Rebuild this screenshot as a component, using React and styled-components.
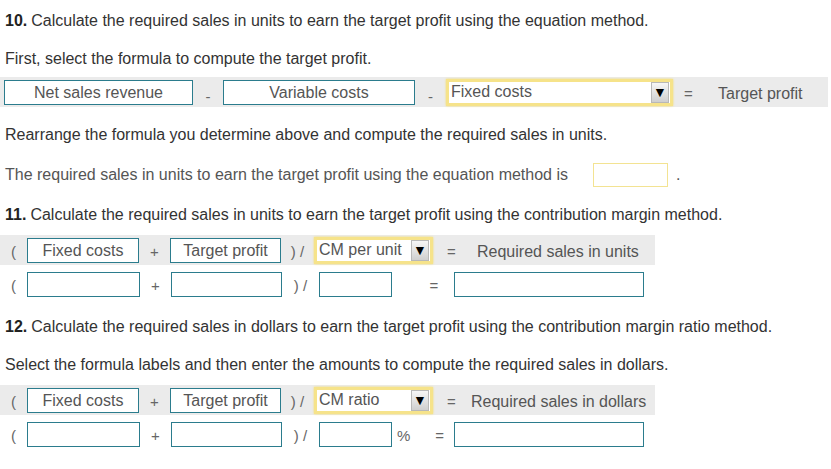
import styled, { createGlobalStyle } from 'styled-components';

const GlobalStyle = createGlobalStyle`
  body {
    margin: 0;
    background: #fff;
    font-family: 'Liberation Sans', Arial, sans-serif;
    color: #333;
  }
`;

const Page = styled.div`
  width: 831px;
  padding: 11px 0 0 5px;
  box-sizing: border-box;
`;

const Text = styled.p`
  margin: 0;
  height: 20px;
  line-height: 20px;
  font-size: 16px;
  white-space: nowrap;
  color: ${(p) => (p.$muted ? '#555' : '#333')};
  margin-bottom: ${(p) => p.$mb || 0}px;
  display: flex;
  align-items: center;

  b {
    font-weight: bold;
    color: #222;
    margin-right: 4px;
  }
`;

const GrayRow = styled.div`
  display: flex;
  align-items: center;
  height: 30px;
  width: ${(p) => p.$w}px;
  margin-left: -5px;
  background: #ebebeb;
  margin-bottom: ${(p) => p.$mb || 0}px;
`;

const PlainRow = styled.div`
  display: flex;
  align-items: center;
  height: 26px;
  margin-left: -5px;
  margin-bottom: ${(p) => p.$mb || 0}px;
`;

const Box = styled.div`
  box-sizing: border-box;
  width: ${(p) => p.$w}px;
  height: 25px;
  padding-top: 2px;
  border: 1px solid #2b7c8d;
  background: #fff;
  display: flex;
  align-items: center;
  justify-content: center;
  font-size: 16px;
  color: #555;
  white-space: nowrap;
`;

const Op = styled.span`
  display: flex;
  align-items: center;
  justify-content: ${(p) => p.$align || 'center'};
  width: ${(p) => p.$w}px;
  padding-left: ${(p) => p.$pl || 0}px;
  box-sizing: border-box;
  font-size: 15px;
  color: #666;
  padding-top: ${(p) => p.$low || 2}px;
`;

const Label = styled.span`
  font-size: 16px;
  color: #555;
  white-space: nowrap;
  padding-left: ${(p) => p.$pl || 0}px;
  padding-top: 4px;
`;

const Select = styled.div`
  box-sizing: border-box;
  width: ${(p) => p.$w}px;
  height: 27px;
  border: 3px solid #f6e38a;
  box-shadow: 0 0 2px #f3dc6b;
  background: #fff;
  display: flex;
  align-items: center;
  padding-left: 2px;
  font-size: 16px;
  color: #555;
  white-space: nowrap;
`;

const Arrow = styled.span`
  margin-left: auto;
  margin-right: 1px;
  width: 18px;
  height: 21px;
  box-sizing: border-box;
  border: 1px solid #b8b8b8;
  background: linear-gradient(#f6f6f6, #cfcfcf);
  display: flex;
  align-items: center;
  justify-content: center;
  font-size: 14px;
  color: #000;
`;

const AnswerBox = styled.span`
  display: inline-block;
  box-sizing: border-box;
  width: 75px;
  height: 24px;
  border: 1px solid #f3e392;
  margin-left: 25px;
  margin-right: 8px;
`;

const Q = ({ n, children, mb }) => (
  <Text $mb={mb}>
    <b>{n}.</b>
    {children}
  </Text>
);

const App = () => (
  <Page>
    <GlobalStyle />
    <Q n="10" mb={18}>
      Calculate the required sales in units to earn the target profit using the equation method.
    </Q>
    <Text $mb={8}>First, select the formula to compute the target profit.</Text>

    <GrayRow $w={828} $mb={18}>
      <Op $w={4} />
      <Box $w={189}>Net sales revenue</Box>
      <Op $w={30} $low={8}>-</Op>
      <Box $w={192}>Variable costs</Box>
      <Op $w={31} $low={8}>-</Op>
      <Select $w={227}>
        Fixed costs
        <Arrow>▼</Arrow>
      </Select>
      <Op $w={27} $pl={4}>=</Op>
      <Label $pl={18}>Target profit</Label>
    </GrayRow>

    <Text $mb={20}>Rearrange the formula you determine above and compute the required sales in units.</Text>
    <Text $muted $mb={20}>
      The required sales in units to earn the target profit using the equation method is
      <AnswerBox />.
    </Text>

    <Q n="11" mb={10}>
      Calculate the required sales in units to earn the target profit using the contribution margin method.
    </Q>
    <GrayRow $w={655} $mb={6}>
      <Op $w={27}>(</Op>
      <Box $w={112}>Fixed costs</Box>
      <Op $w={31}>+</Op>
      <Box $w={111}>Target profit</Box>
      <Op $w={33}>)&nbsp;/</Op>
      <Select $w={119}>
        CM per unit
        <Arrow>▼</Arrow>
      </Select>
      <Op $w={37}>=</Op>
      <Label $pl={7}>Required sales in units</Label>
    </GrayRow>
    <PlainRow $mb={20}>
      <Op $w={27}>(</Op>
      <Box $w={113}>&nbsp;</Box>
      <Op $w={31}>+</Op>
      <Box $w={111}>&nbsp;</Box>
      <Op $w={37}>)&nbsp;/</Op>
      <Box $w={73}>&nbsp;</Box>
      <Op $w={62} $pl={22}>=</Op>
      <Box $w={190}>&nbsp;</Box>
    </PlainRow>

    <Q n="12" mb={18}>
      Calculate the required sales in dollars to earn the target profit using the contribution margin ratio method.
    </Q>
    <Text $mb={10}>Select the formula labels and then enter the amounts to compute the required sales in dollars.</Text>
    <GrayRow $w={655} $mb={6}>
      <Op $w={27}>(</Op>
      <Box $w={112}>Fixed costs</Box>
      <Op $w={31}>+</Op>
      <Box $w={111}>Target profit</Box>
      <Op $w={33}>)&nbsp;/</Op>
      <Select $w={119}>
        CM ratio
        <Arrow>▼</Arrow>
      </Select>
      <Op $w={37}>=</Op>
      <Label $pl={1}>Required sales in dollars</Label>
    </GrayRow>
    <PlainRow>
      <Op $w={27}>(</Op>
      <Box $w={113}>&nbsp;</Box>
      <Op $w={31}>+</Op>
      <Box $w={111}>&nbsp;</Box>
      <Op $w={37}>)&nbsp;/</Op>
      <Box $w={73}>&nbsp;</Box>
      <Op $w={62} $align="space-between" $pl={5}>
        <span>%</span>
        <span style={{ marginRight: 10 }}>=</span>
      </Op>
      <Box $w={190}>&nbsp;</Box>
    </PlainRow>
  </Page>
);

export default App;
